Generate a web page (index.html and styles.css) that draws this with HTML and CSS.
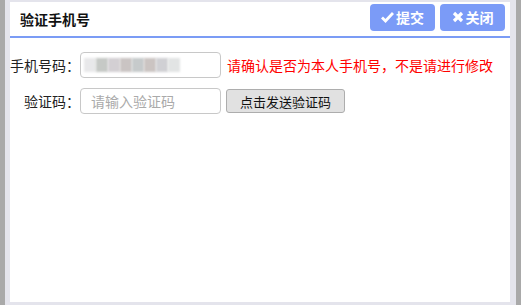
FILE: index.html
```html
<!DOCTYPE html>
<html lang="zh-CN">
<head>
  <meta charset="UTF-8" />
  <title>验证手机号</title>
  <link rel="stylesheet" href="styles.css">
</head>
<body>

<div class="frame">
  <div class="dialog">
    <div class="dialog-head">
      <h1>验证手机号</h1>
      <div class="actions">
        <button type="button" class="head-btn">
          <svg width="13" height="12" viewBox="0 0 13 12"><path d="M1 6.5 L4.5 10 L12 2" fill="none" stroke="#fff" stroke-width="2.8"/></svg>提交
        </button>
        <button type="button" class="head-btn">
          <svg width="12" height="12" viewBox="0 0 12 12"><path d="M2 2 L10 10 M10 2 L2 10" fill="none" stroke="#fff" stroke-width="3.2"/></svg>关闭
        </button>
      </div>
    </div>

    <form class="verify-form">
      <div class="row">
        <label>手机号码：</label>
        <div class="field masked">
          <span class="blur b1"></span><span class="blur b2"></span><span class="blur b3"></span><span class="blur b4"></span><span class="blur b5"></span><span class="blur b6"></span><span class="blur b7"></span><span class="blur b8"></span>
        </div>
        <span class="hint">请确认是否为本人手机号，不是请进行修改</span>
      </div>
      <div class="row">
        <label>验证码：</label>
        <input class="field" type="text" placeholder="请输入验证码">
        <button type="button" class="send-btn">点击发送验证码</button>
      </div>
    </form>
  </div>
</div>

</body>
</html>
```

FILE: styles.css
```css
* { box-sizing: border-box; }

html, body {
  margin: 0;
  height: 100%;
}

body {
  background: #a9a9a9;
  padding: 0 5px 0 5px;
  font-family: "Noto Sans CJK SC", "Noto Sans", sans-serif;
  font-size: 14px;
  color: #222;
}

.frame {
  height: 305px;
  background: #e4e4ec;
  padding: 2px 6px 3px 5px;
}

.dialog {
  height: 100%;
  background: #fff;
}

.dialog-head {
  display: flex;
  align-items: center;
  justify-content: space-between;
  height: 36px;
  padding: 0 5px 0 10px;
  border-bottom: 2px solid #7b9cf5;
}

h1 {
  margin: 0;
  font-size: 14px;
  font-weight: bold;
  color: #111;
}

.actions {
  display: flex;
  gap: 5px;
  margin-top: -4px;
}

.head-btn {
  display: flex;
  align-items: center;
  justify-content: center;
  gap: 2px;
  width: 65px;
  height: 27px;
  padding: 0;
  border: none;
  border-radius: 4px;
  background: #7b9bf7;
  color: #fff;
  font-family: inherit;
  font-size: 14px;
  font-weight: bold;
}

.verify-form {
  padding-top: 14px;
}

.row {
  display: flex;
  align-items: center;
  height: 26px;
  margin-bottom: 10px;
}

.row label {
  width: 70px;
  text-align: right;
  font-size: 14px;
  color: #222;
}

.field {
  width: 141px;
  height: 26px;
  border: 1px solid #c8c8c8;
  border-radius: 4px;
  padding: 0 10px;
  font-family: inherit;
  font-size: 14px;
  outline: none;
}

.field::placeholder {
  color: #aaa;
}

.masked {
  display: flex;
  align-items: center;
  padding: 0 3px;
}

.blur {
  display: inline-block;
  width: 12px;
  height: 14px;
  filter: blur(0.8px);
}

.b1 { background: #e8e8ea; }
.b2 { background: #c6c9c6; }
.b3 { background: #d3cfd3; }
.b4 { background: #cac4c3; }
.b5 { background: #c6cacb; }
.b6 { background: #cbc4c2; }
.b7 { background: #d0d0d4; }
.b8 { background: #e2e4e4; }

.hint {
  margin-left: 6px;
  color: #f00;
  font-size: 14px;
}

.send-btn {
  margin-left: 5px;
  width: 119px;
  height: 24px;
  padding: 0;
  background: #e1e1e1;
  border: 1px solid #adadad;
  border-radius: 3px;
  font-family: inherit;
  font-size: 13px;
  color: #111;
}
```
